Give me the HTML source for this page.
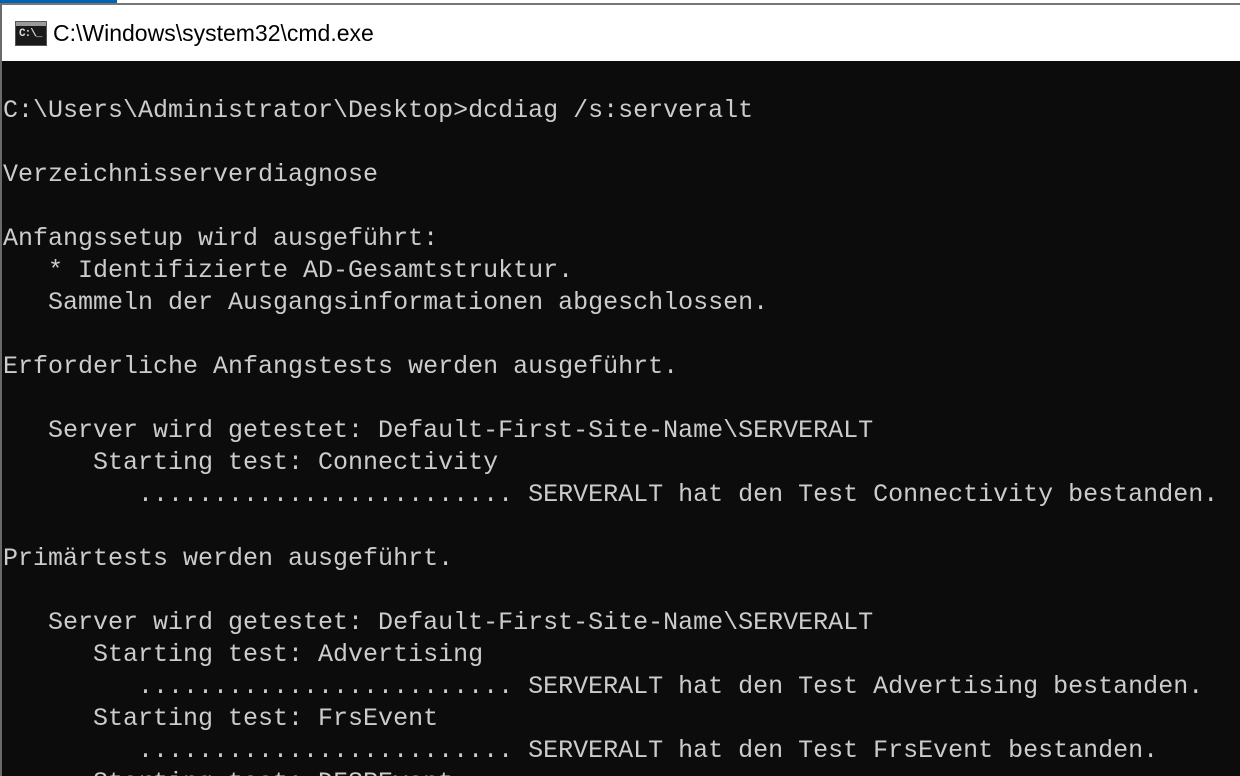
<!DOCTYPE html>
<html><head><meta charset="utf-8"><style>
*{margin:0;padding:0;box-sizing:border-box}
html,body{width:1240px;height:776px;overflow:hidden;background:#0c0c0c}
#wrap{position:relative;width:1240px;height:776px;overflow:hidden}
#top{position:absolute;left:0;top:0;width:1240px;height:3px;background:#fff}
#blue{position:absolute;left:0;top:0;width:117px;height:3px;background:#0063b1}
#gline{position:absolute;left:0;top:3px;width:1240px;height:2px;background:#777}
#title{position:absolute;left:2px;top:5px;width:1238px;height:56px;background:#fff}
#lb{position:absolute;left:0;top:3px;width:2px;height:773px;background:#6a6a6a}
#icon{position:absolute;left:15px;top:21px;width:32px;height:25px;background:#1a1a1a;border:1px solid #555}
#icon .bar{position:absolute;left:0;top:0;right:0;height:4px;background:#9a9a9a}
#icon span{position:absolute;left:3px;top:6px;font:bold 11px "Liberation Mono",monospace;color:#ddd;letter-spacing:-1px}
#ttext{position:absolute;left:53px;top:20px;font:23px "Liberation Sans",sans-serif;color:#000}
pre{position:absolute;left:3px;top:95px;font:25px/32px "Liberation Mono","DejaVu Sans Mono",monospace;color:#cccccc;white-space:pre}
</style></head><body><div id="wrap">
<div id="title"></div>
<div id="top"></div><div id="blue"></div><div id="gline"></div>
<div id="icon"><div class="bar"></div><span>C:\_</span></div>
<div id="ttext">C:\Windows\system32\cmd.exe</div>
<pre>C:\Users\Administrator\Desktop&gt;dcdiag /s:serveralt

Verzeichnisserverdiagnose

Anfangssetup wird ausgeführt:
   * Identifizierte AD-Gesamtstruktur.
   Sammeln der Ausgangsinformationen abgeschlossen.

Erforderliche Anfangstests werden ausgeführt.

   Server wird getestet: Default-First-Site-Name\SERVERALT
      Starting test: Connectivity
         ......................... SERVERALT hat den Test Connectivity bestanden.

Primärtests werden ausgeführt.

   Server wird getestet: Default-First-Site-Name\SERVERALT
      Starting test: Advertising
         ......................... SERVERALT hat den Test Advertising bestanden.
      Starting test: FrsEvent
         ......................... SERVERALT hat den Test FrsEvent bestanden.
      Starting test: DFSREvent</pre>
<div id="lb"></div>
</div></body></html>
